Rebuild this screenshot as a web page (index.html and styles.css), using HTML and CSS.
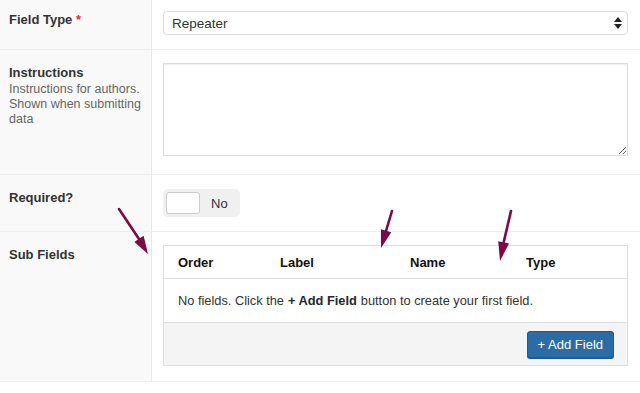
FILE: index.html
```html
<!DOCTYPE html>
<html lang="en">

<head>
    <meta charset="UTF-8">
    <meta name="viewport" content="width=device-width, initial-scale=1.0">
    <title>Field Settings</title>
    <link rel="stylesheet" href="styles.css">
</head>

<body>
    <div class="field-settings">
        <!-- Field Type -->
        <div class="setting-row first">
            <div class="setting-label">
                <label>Field Type <span class="required">*</span></label>
            </div>
            <div class="setting-input">
                <div class="select">
                    <span>Repeater</span>
                    <svg class="select-arrows" width="8" height="12" viewBox="0 0 8 12">
                        <polygon points="4,0 8,5 0,5" />
                        <polygon points="0,7 8,7 4,12" />
                    </svg>
                </div>
            </div>
        </div>

        <!-- Instructions -->
        <div class="setting-row">
            <div class="setting-label">
                <label>Instructions</label>
                <p class="description">Instructions for authors. Shown when submitting data</p>
            </div>
            <div class="setting-input">
                <textarea class="textarea" rows="6"></textarea>
            </div>
        </div>

        <!-- Required -->
        <div class="setting-row">
            <div class="setting-label">
                <label>Required?</label>
            </div>
            <div class="setting-input">
                <div class="toggle">
                    <span class="knob"></span>
                    <span class="toggle-text">No</span>
                </div>
            </div>
        </div>

        <!-- Sub Fields -->
        <div class="setting-row">
            <div class="setting-label">
                <label>Sub Fields</label>
            </div>
            <div class="setting-input">
                <div class="repeater">
                    <div class="repeater-head">
                        <span>Order</span>
                        <span>Label</span>
                        <span>Name</span>
                        <span>Type</span>
                    </div>
                    <div class="repeater-body">
                        No fields. Click the <strong>+ Add Field</strong> button to create your first field.
                    </div>
                    <div class="repeater-foot">
                        <button class="button-primary">+ Add Field</button>
                    </div>
                </div>
            </div>
        </div>
    </div>

    <!-- Annotation arrows drawn over the screenshot -->
    <svg class="annotations" width="640" height="393" viewBox="0 0 640 393">
        <g class="arrow">
            <line x1="119" y1="209" x2="139" y2="239" />
            <polygon points="148,254 134.4,242 143.6,235.8" />
        </g>
        <g class="arrow">
            <line x1="392" y1="211" x2="386" y2="231" />
            <polygon points="381,248 380.9,229.2 391.3,232.2" />
        </g>
        <g class="arrow">
            <line x1="511" y1="211" x2="503.5" y2="243" />
            <polygon points="500,261 498.2,241.3 509,243.5" />
        </g>
    </svg>
</body>

</html>
```

FILE: styles.css
```css
/* General Styles */
body {
    margin: 0;
    font-family: 'Liberation Sans', Arial, sans-serif;
    font-size: 13px;
    color: #23282d;
    background: #fff;
    overflow: hidden;
}

/* Settings Table */
.field-settings {
    width: 640px;
}

.setting-row {
    display: flex;
    border-bottom: 1px solid #eeeeee;
}

.setting-row.first {
    margin-top: -3px;
}

.setting-label {
    width: 142px;
    flex-shrink: 0;
    padding: 14px 0 14px 9px;
    background: #f9f9f9;
    border-right: 1px solid #e8e8e8;
}

.setting-label label {
    display: block;
    font-weight: bold;
    line-height: 17px;
    color: #333;
}

.required {
    color: #dc3232;
}

.description {
    margin: 1px 0 0;
    font-size: 12.5px;
    line-height: 15px;
    color: #666;
}

.setting-input {
    flex: 1;
    padding: 14px 12px 14px 11px;
}

/* Select */
.select {
    height: 22px;
    display: flex;
    align-items: center;
    justify-content: space-between;
    padding: 0 5px 0 8px;
    border: 1px solid #dddddd;
    border-radius: 4px;
    background: #fff;
    font-size: 13.5px;
    color: #333;
}

.select-arrows {
    fill: #222;
}

/* Textarea */
.textarea {
    display: block;
    width: 100%;
    height: 93px;
    box-sizing: border-box;
    margin: -1px 0 4px;
    border: 1px solid #dddddd;
    box-shadow: inset 0 1px 2px rgba(0, 0, 0, 0.07);
    font-family: inherit;
}

/* Toggle */
.toggle {
    display: flex;
    width: fit-content;
    align-items: center;
    height: 28px;
    padding: 0 3px;
    box-sizing: border-box;
    background: #f0f0f0;
    border-radius: 5px;
}

.knob {
    width: 32px;
    height: 20px;
    background: #fff;
    border: 1px solid #cccccc;
    border-radius: 3px;
}

.toggle-text {
    padding: 0 9px 0 11px;
    color: #333;
}

/* Repeater Table */
.repeater {
    margin-top: -1px;
    margin-bottom: 1px;
    border: 1px solid #dfdfdf;
}

.repeater-head {
    display: grid;
    grid-template-columns: 102px 130px 116px 1fr;
    height: 32px;
    align-items: center;
    padding-left: 14px;
    border-bottom: 1px solid #dfdfdf;
    font-weight: bold;
    color: #111;
}

.repeater-body {
    height: 43px;
    display: flex;
    align-items: center;
    padding-left: 14px;
    gap: 4px;
    border-bottom: 1px solid #dfdfdf;
    font-size: 12.8px;
    color: #333;
}

.repeater-body strong {
    color: #23282d;
}

.repeater-foot {
    height: 42px;
    display: flex;
    align-items: center;
    justify-content: flex-end;
    padding-right: 13px;
    background: #f4f4f4;
}

.button-primary {
    height: 27px;
    padding: 0 10px;
    font-family: inherit;
    font-size: 13px;
    color: #fff;
    background: #2b6ca7;
    border: 1px solid #1f5b91;
    border-radius: 3px;
    box-shadow: 0 1px 0 #1f5b91;
}

/* Annotations */
.annotations {
    position: absolute;
    top: 0;
    left: 0;
    pointer-events: none;
}

.arrow line {
    stroke: #7a0a48;
    stroke-width: 2.6;
    stroke-linecap: round;
}

.arrow polygon {
    fill: #7a0a48;
}
```
